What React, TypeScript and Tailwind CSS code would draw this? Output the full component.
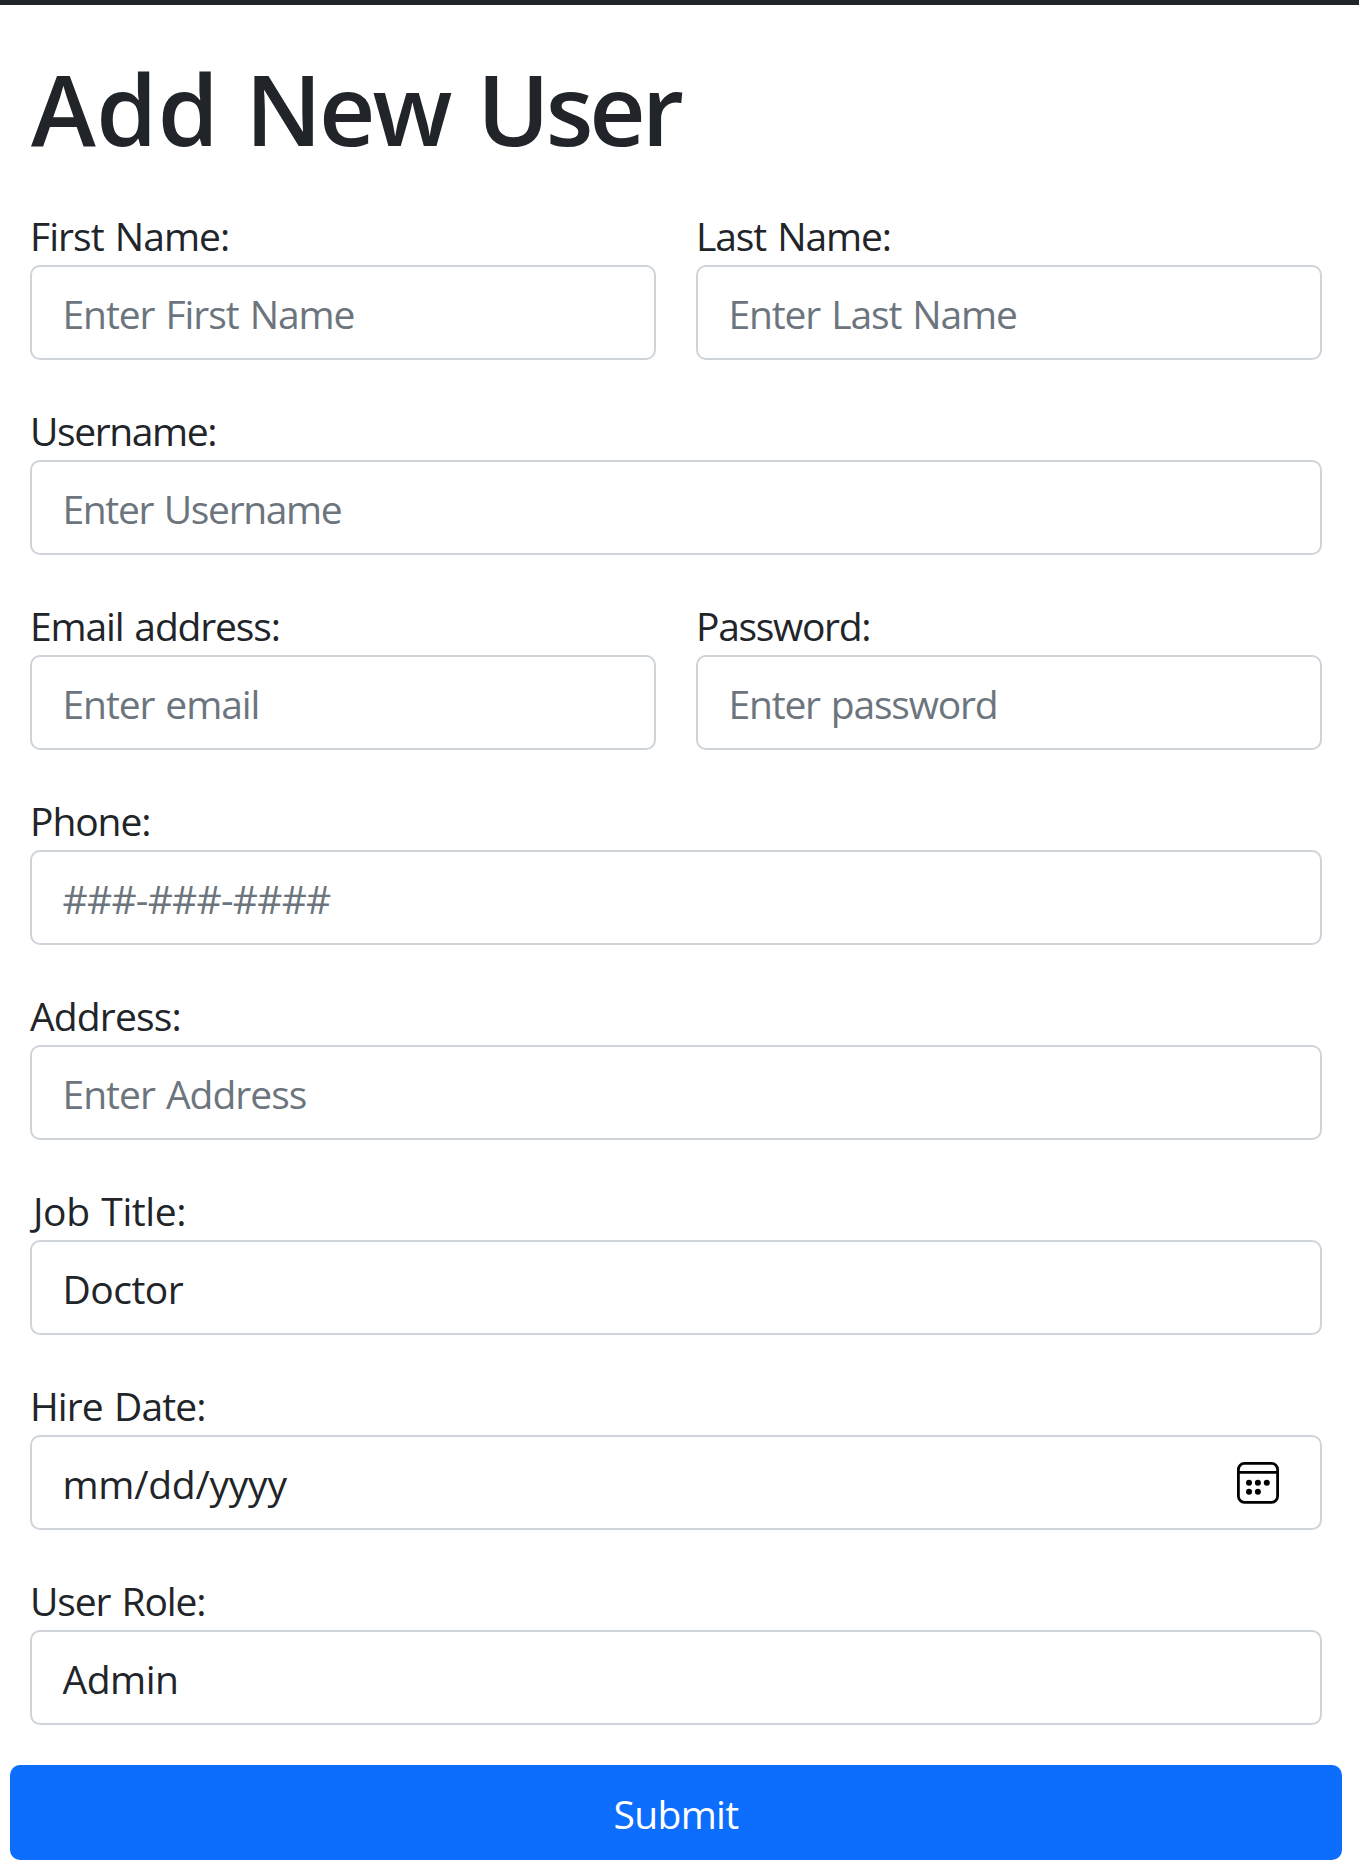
import type { ReactNode } from 'react';

const box =
  'block h-[95px] w-full rounded-[10px] border-2 border-[#ced4da] bg-white pl-[30.5px] pr-[30px] pt-[1px] text-[39px] text-[#212529] outline-none [word-spacing:2px] placeholder:text-[#6c757d] placeholder:opacity-100';

function Field({ id, label, tracking, children }: { id: string; label: string; tracking: string; children: ReactNode }) {
  return (
    <div className="min-w-0 flex-1">
      <label htmlFor={id} className={`block h-[60px] pt-px text-[39px] leading-[60px] whitespace-nowrap [word-spacing:2px] ${tracking}`}>
        {label}
      </label>
      {children}
    </div>
  );
}

function CalendarIcon() {
  return (
    <svg width="42" height="42" viewBox="0 0 42 42" fill="none" aria-hidden="true">
      <rect x="1.4" y="1.4" width="39.2" height="38.9" rx="6" stroke="#000" strokeWidth="2.8" />
      <path d="M2 10.4H40" stroke="#000" strokeWidth="2.8" />
      <g fill="#000">
        <circle cx="12" cy="20.8" r="3" />
        <circle cx="20.9" cy="20.8" r="3" />
        <circle cx="29.8" cy="20.8" r="3" />
        <circle cx="12" cy="29.7" r="3" />
        <circle cx="20.9" cy="29.7" r="3" />
      </g>
    </svg>
  );
}

export default function App() {
  return (
    <div className="h-[1860px] w-[1359px] overflow-hidden bg-white font-['Open_Sans','Noto_Sans',sans-serif] text-[#212529]">
      <div className="h-[5px] bg-[#212529]" />
      <form onSubmit={(e) => e.preventDefault()}>
        <h1 className="h-[200px] pt-[43px] pl-[31px] text-[98px] leading-[120px] font-[570] whitespace-nowrap">
          <span className="tracking-[0.5px]">Add </span>
          <span className="tracking-[-3px]">New </span>
          <span className="ml-[5px] tracking-[-4px]">User</span>
        </h1>
        <div className="ml-[30px] flex w-[1292px] flex-col gap-10">
          <div className="flex gap-10">
            <Field id="first" label="First Name:" tracking="tracking-[-0.95px]">
              <input id="first" className={`${box} tracking-[-1.07px]`} placeholder="Enter First Name" />
            </Field>
            <Field id="last" label="Last Name:" tracking="tracking-[-1.1px]">
              <input id="last" className={`${box} tracking-[-1.13px]`} placeholder="Enter Last Name" />
            </Field>
          </div>
          <Field id="username" label="Username:" tracking="tracking-[-1.4px]">
            <input id="username" className={`${box} tracking-[-1.36px]`} placeholder="Enter Username" />
          </Field>
          <div className="flex gap-10">
            <Field id="email" label="Email address:" tracking="tracking-[-1.15px]">
              <input id="email" className={`${box} tracking-[-1.1px]`} placeholder="Enter email" />
            </Field>
            <Field id="password" label="Password:" tracking="tracking-[-1.32px]">
              <input id="password" className={`${box} tracking-[-1.2px]`} placeholder="Enter password" />
            </Field>
          </div>
          <Field id="phone" label="Phone:" tracking="tracking-[-1.08px]">
            <input id="phone" className={`${box} tracking-[-0.75px]`} placeholder="###-###-####" />
          </Field>
          <Field id="address" label="Address:" tracking="tracking-[-0.84px]">
            <input id="address" className={`${box} tracking-[-1px]`} placeholder="Enter Address" />
          </Field>
          <Field id="job" label="Job Title:" tracking="pl-[3px] tracking-[-0.4px]">
            <input id="job" className={`${box} tracking-[-0.5px]`} defaultValue="Doctor" />
          </Field>
          <Field id="hire" label="Hire Date:" tracking="tracking-[-0.9px]">
            <div id="hire" className={`${box} tracking-[-0.25px]`}>
              <div className="flex h-[92px] items-center justify-between pr-[11px]">
                <span>mm/dd/yyyy</span>
                <span className="pb-[3px]">
                  <CalendarIcon />
                </span>
              </div>
            </div>
          </Field>
          <Field id="role" label="User Role:" tracking="tracking-[-1.1px]">
            <input id="role" className={`${box} tracking-[-0.5px]`} defaultValue="Admin" />
          </Field>
        </div>
        <button
          type="submit"
          className="mt-10 ml-[10px] block h-[95px] w-[1332px] rounded-[10px] bg-[#0d6efd] pt-[3px] text-center text-[39px] tracking-[-0.7px] text-white"
        >
          Submit
        </button>
      </form>
    </div>
  );
}
